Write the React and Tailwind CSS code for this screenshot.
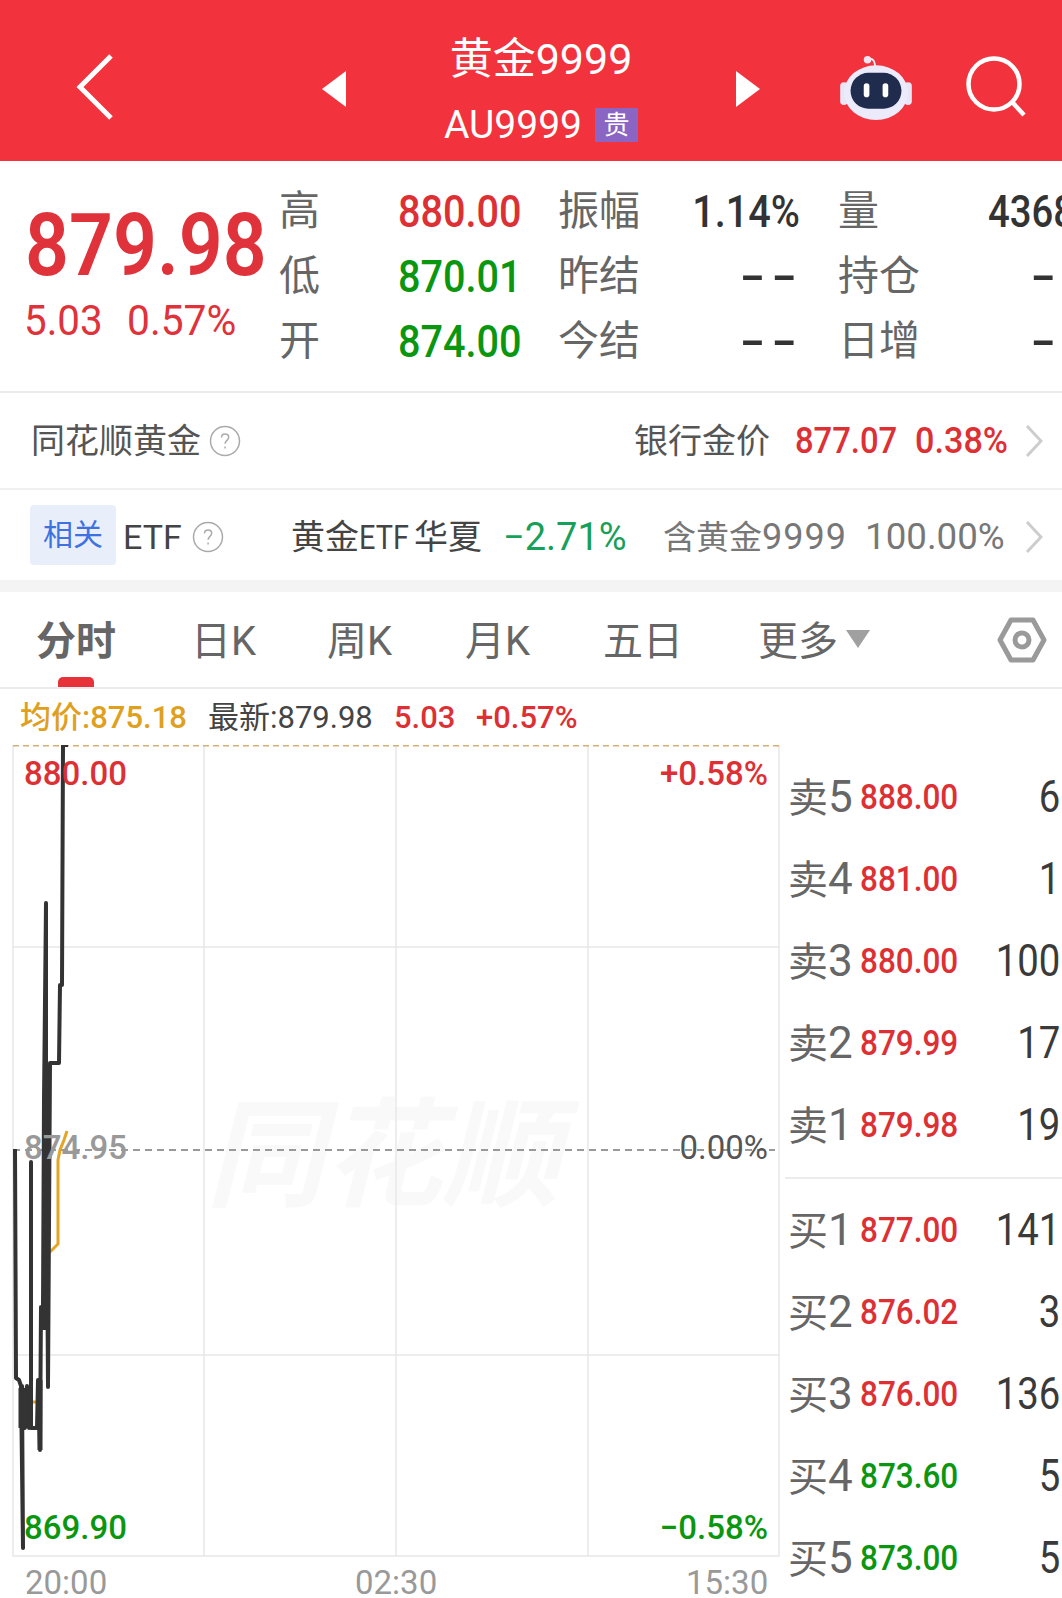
import React from "react";

const asks = [
  { label: "卖", n: 5, price: "888.00", qty: "6" },
  { label: "卖", n: 4, price: "881.00", qty: "1" },
  { label: "卖", n: 3, price: "880.00", qty: "100" },
  { label: "卖", n: 2, price: "879.99", qty: "17" },
  { label: "卖", n: 1, price: "879.98", qty: "19" },
];

const bids = [
  { label: "买", n: 1, price: "877.00", qty: "141", color: "text-[#dd3035]" },
  { label: "买", n: 2, price: "876.02", qty: "3", color: "text-[#dd3035]" },
  { label: "买", n: 3, price: "876.00", qty: "136", color: "text-[#dd3035]" },
  { label: "买", n: 4, price: "873.60", qty: "5", color: "text-[#0a960f]" },
  { label: "买", n: 5, price: "873.00", qty: "5", color: "text-[#0a960f]" },
];

const Help = () => (
  <svg width="32" height="32" viewBox="0 0 32 32" fill="none" stroke="#aaa" strokeWidth="1.5">
    <circle cx="16" cy="16" r="14.5" />
    <path d="M12.5 12.5c0-2.2 1.6-3.6 3.6-3.6s3.6 1.4 3.6 3.4c0 3-3.6 3.2-3.6 6.4" />
    <path d="M16.1 21.5v2" />
  </svg>
);

const Chevron = () => (
  <svg width="18" height="34" viewBox="0 0 18 34" fill="none" stroke="#cdcdcd" strokeWidth="3">
    <path d="M2 2l14 15L2 32" />
  </svg>
);

const BookRow = ({ row, color }) => (
  <div className="h-[82px] flex items-center whitespace-nowrap">
    <span className="w-[72px] flex items-baseline text-[#666]">
      <span className="text-[40px] leading-none">{row.label}</span>
      <span className="text-[44px] leading-none">{row.n}</span>
    </span>
    <span className={`w-[110px] inline-block origin-left scale-x-[0.9] text-[35px] leading-none font-medium ${row.color || color}`}>
      {row.price}
    </span>
    <span className="flex-1 text-right origin-right scale-x-[0.87] text-[44px] leading-none text-[#3a3a3a] pr-[2px]">
      {row.qty}
    </span>
  </div>
);

const Tab = ({ children, className }) => (
  <span className={`text-[40px] leading-none text-[#666] ${className}`}>{children}</span>
);

const Dashes = ({ className }) => (
  <span className={`text-[40px] font-bold tracking-[3px] scale-x-[1.7] text-[#333] ${className}`}>--</span>
);

export default function App() {
  return (
    <div className="w-[1062px] h-[1598px] overflow-hidden bg-white font-['Roboto','Noto_Sans_CJK_SC',sans-serif]">
      {/* title bar */}
      <div className="h-[161px] bg-[#f2323c] flex items-center text-white">
        <svg className="ml-[76px] mt-[12px]" width="38" height="66" viewBox="0 0 38 66" fill="none" stroke="white" strokeWidth="5">
          <path d="M35 2L4 33l31 31" />
        </svg>
        <svg className="ml-[208px] mt-[16px]" width="24" height="36" viewBox="0 0 24 36" fill="white">
          <path d="M24 0v36L0 18z" />
        </svg>
        <div className="w-[390px] self-start pt-[25px] flex flex-col items-center">
          <div className="h-[68px] flex items-center text-[43px] leading-none whitespace-nowrap">
            黄金9999
          </div>
          <div className="h-[64px] flex items-center whitespace-nowrap">
            <span className="text-[39px] leading-none">AU9999</span>
            <span className="ml-[13px] w-[43px] h-[34px] bg-[#8b65c4] flex items-center justify-center text-[26px] leading-none">贵</span>
          </div>
        </div>
        <svg className="mt-[16px]" width="24" height="36" viewBox="0 0 24 36" fill="white">
          <path d="M0 0v36L24 18z" />
        </svg>
        <svg className="ml-[80px] mt-[12px]" width="72" height="66" viewBox="0 0 76 70">
          <path d="M30 8c2-5 7-3 7 6" fill="none" stroke="#eeeefa" strokeWidth="2" />
          <circle cx="29" cy="6" r="4" fill="#f3e6f0" />
          <rect x="0" y="30" width="8" height="24" rx="4" fill="#e6e6f6" />
          <rect x="68" y="30" width="8" height="24" rx="4" fill="#e6e6f6" />
          <ellipse cx="38" cy="41" rx="34" ry="29" fill="#ecebfb" />
          <rect x="11" y="20" width="54" height="38" rx="19" fill="#1f2c4d" />
          <rect x="25" y="31" width="6" height="15" rx="3" fill="white" />
          <rect x="45" y="31" width="6" height="15" rx="3" fill="white" />
        </svg>
        <svg className="ml-[54px] mt-[12px]" width="62" height="62" viewBox="0 0 62 62" fill="none" stroke="white" strokeWidth="4.5">
          <circle cx="28" cy="28" r="25.5" />
          <path d="M47 47l11 12" />
        </svg>
      </div>

      {/* quote */}
      <div className="h-[232px] flex border-b-2 border-[#ececec] whitespace-nowrap">
        <div className="w-[279px] pl-[25px] pt-[40px]">
          <div className="origin-left scale-x-[0.875] text-[88px] leading-[88px] font-semibold text-[#e0323a]">879.98</div>
          <div className="flex text-[#e0323a] text-[42px] leading-none mt-[11px] ml-[-1px]">
            <span className="w-[103px] inline-block origin-left scale-x-[0.96]">5.03</span>
            <span className="inline-block origin-left scale-x-[0.97]">0.57%</span>
          </div>
        </div>
        <div className="grid grid-cols-[119px_160px_100px_138px_100px_auto] auto-rows-[65px] pt-[18px] text-[41px] leading-none items-center">
          <span className="text-[#666]">高</span>
          <span className="origin-left scale-x-[0.9] text-[44px] font-medium text-[#dd3035]">880.00</span>
          <span className="text-[#666]">振幅</span>
          <span className="text-right origin-right scale-x-[0.9] mr-[-4px] text-[44px] font-medium text-[#333]">1.14%</span>
          <span className="text-[#666] pl-[42px] w-[200px]">量</span>
          <span className="origin-left scale-x-[0.87] ml-[92px] text-[44px] font-medium text-[#333]">4368</span>

          <span className="text-[#666]">低</span>
          <span className="origin-left scale-x-[0.9] text-[44px] font-medium text-[#0a960f]">870.01</span>
          <span className="text-[#666]">昨结</span>
          <Dashes className="text-right origin-right mr-[-7px]" />
          <span className="text-[#666] pl-[42px] w-[200px]">持仓</span>
          <Dashes className="origin-left ml-[134px]" />

          <span className="text-[#666]">开</span>
          <span className="origin-left scale-x-[0.9] text-[44px] font-medium text-[#0a960f]">874.00</span>
          <span className="text-[#666]">今结</span>
          <Dashes className="text-right origin-right mr-[-7px]" />
          <span className="text-[#666] pl-[42px] w-[200px]">日增</span>
          <Dashes className="origin-left ml-[134px]" />
        </div>
      </div>

      {/* gold price row */}
      <div className="h-[97px] flex items-center pl-[31px] border-b-2 border-[#f0f0f0] whitespace-nowrap">
        <span className="text-[34px] leading-none text-[#555]">同花顺黄金</span>
        <span className="ml-[8px] flex"><Help /></span>
        <span className="ml-[393px] text-[34px] leading-none text-[#555]">银行金价</span>
        <span className="ml-[25px] w-[120px] origin-left scale-x-[0.91] text-[36px] leading-none font-medium text-[#dd3035]">877.07</span>
        <span className="w-[110px] origin-left scale-x-[0.95] text-[36px] leading-none font-medium text-[#dd3035]">0.38%</span>
        <Chevron />
      </div>

      {/* etf row */}
      <div className="h-[90px] flex items-center pl-[30px] pt-[4px] whitespace-nowrap">
        <span className="w-[86px] h-[60px] mt-[-4px] rounded-[4px] bg-[#e8effb] text-[#3d72e0] text-[30px] leading-none flex items-center justify-center">相关</span>
        <span className="ml-[7px] w-[69px] text-[34px] leading-none text-[#444]">ETF</span>
        <span className="flex"><Help /></span>
        <span className="ml-[67px] w-[212px] flex items-center text-[34px] leading-none text-[#444]">
          <span>黄金</span>
          <span className="w-[55px] origin-left scale-x-[0.85]">ETF</span>
          <span>华夏</span>
        </span>
        <span className="w-[160px] text-[38px] leading-none text-[#17a05a]">−2.71%</span>
        <span className="text-[33px] leading-none text-[#777]">含黄金</span>
        <span className="w-[103px] tracking-[1px] text-[36px] leading-none text-[#777]">9999</span>
        <span className="w-[160px] origin-left scale-x-[1.02] text-[36px] leading-none text-[#777]">100.00%</span>
        <Chevron />
      </div>
      <div className="h-[12px] bg-[#f4f4f4]" />

      {/* period tabs */}
      <div className="relative h-[97px] flex items-center pl-[36px] pt-[4px] border-b-2 border-[#ececec] whitespace-nowrap">
        <Tab className="w-[155px] font-bold text-[#333]">分时</Tab>
        <Tab className="w-[136px]">日K</Tab>
        <Tab className="w-[138px]">周K</Tab>
        <Tab className="w-[138px]">月K</Tab>
        <Tab className="w-[155px]">五日</Tab>
        <Tab>更多</Tab>
        <svg className="ml-[8px] mb-[6px]" width="24" height="18" viewBox="0 0 24 18" fill="#a0a0a0">
          <path d="M0 0h24L12 18z" />
        </svg>
        <svg className="ml-[127px] mt-[-4px]" width="50" height="46" viewBox="0 0 50 46" fill="none" stroke="#9a9a9a" strokeWidth="5">
          <path d="M14 3h22l11 20-11 20H14L3 23z" strokeLinejoin="round" />
          <circle cx="25" cy="23" r="7" />
        </svg>
        <div className="absolute left-[58px] bottom-0 w-[36px] h-[10px] rounded-t-[5px] bg-[#e8323a]" />
      </div>

      {/* legend */}
      <div className="h-[56px] flex items-center pl-[20px] text-[31px] leading-none whitespace-nowrap">
        <span className="w-[188px] font-medium text-[#dfa01e]">均价:875.18</span>
        <span className="w-[186px] text-[#444]">最新:879.98</span>
        <span className="w-[82px] font-medium text-[#dd3035]">5.03</span>
        <span className="font-medium text-[#dd3035]">+0.57%</span>
      </div>

      <div className="flex">
        {/* time chart */}
        <div className="relative w-[785px] h-[853px] text-[33px] leading-none">
          <svg className="absolute left-0 top-0" width="785" height="853" viewBox="0 745 785 853">
            <text x="383" y="1197" textAnchor="middle" fontSize="118" fontWeight="700" fontStyle="italic" fill="#f9f9f9">同花顺</text>
            <path d="M13 745V1556H779V745M204 745V1556M396 745V1556M588 745V1556M13 947H779M13 1355H779" fill="none" stroke="#e8e8e8" strokeWidth="1.5" />
            <path d="M13 745.5H779" fill="none" stroke="#d3b070" strokeWidth="2" strokeDasharray="6 4" />
            <path d="M13 1150H775" fill="none" stroke="#999" strokeWidth="2" strokeDasharray="7 5" />
            <path d="M33 1402H39M50 1252L58 1244V1160L60 1150L64 1140L67 1131" fill="none" stroke="#e4a424" strokeWidth="3" />
            <path d="M15 1149L16 1378L19 1380L21 1386L23 1548L22 1386L25 1428L27 1386L29 1428L31 1386L31 1162L31 1428L37 1428L38 1380L40 1450L41 1307L43 1307L44 1100L46 903L46 1063L48 1387L50 1063L59 1063L60 985L62 985L63 745L68 745" fill="none" stroke="#333" strokeWidth="4" strokeLinejoin="round" />
            <path d="M46 1060V1310M48 1100V1330M44 1150V1330" fill="none" stroke="#333" strokeWidth="4" />
            <path d="M21 1388V1428M25 1388V1428M29 1388V1428M40 1380V1450" fill="none" stroke="#333" strokeWidth="5" />
          </svg>
          <span className="absolute left-[24px] top-[12px] font-medium text-[#dd3035]">880.00</span>
          <span className="absolute right-[17px] top-[12px] font-medium text-[#dd3035]">+0.58%</span>
          <span className="absolute left-[24px] top-[386px] font-medium text-[#999]">874.95</span>
          <span className="absolute right-[17px] top-[386px] text-[#555]">0.00%</span>
          <span className="absolute left-[24px] top-[766px] font-medium text-[#0a960f]">869.90</span>
          <span className="absolute right-[17px] top-[766px] font-medium text-[#0a960f]">−0.58%</span>
          <span className="absolute left-[25px] top-[825px] leading-[26px] text-[#999]">20:00</span>
          <span className="absolute left-[355px] top-[825px] leading-[26px] text-[#999]">02:30</span>
          <span className="absolute left-[686px] top-[825px] leading-[26px] text-[#999]">15:30</span>
        </div>

        {/* order book */}
        <div className="flex-1 pt-[11px]">
          <div className="pl-[5px] ml-[-2px]">
            {asks.map((row) => (
              <BookRow key={row.label + row.n} row={row} color="text-[#dd3035]" />
            ))}
          </div>
          <div className="mt-[11px] mb-[10px] h-[2px] bg-[#ececec]" />
          <div className="pl-[5px] ml-[-2px]">
            {bids.map((row) => (
              <BookRow key={row.label + row.n} row={row} />
            ))}
          </div>
        </div>
      </div>
    </div>
  );
}
